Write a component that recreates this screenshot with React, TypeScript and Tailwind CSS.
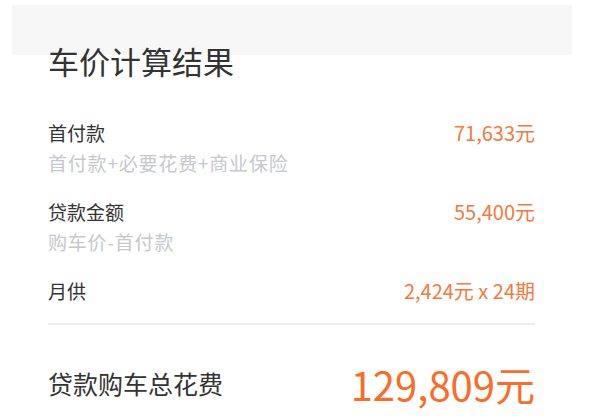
import React from "react";

const font = { fontFamily: '"Noto Sans CJK SC", "Noto Sans", sans-serif' };

function Row({ label, value, sub }: { label: string; value: string; sub?: string }) {
  return (
    <div className="flex flex-col">
      <div className="flex items-center justify-between h-[30px]">
        <span className="text-[19px] text-[#333333]">{label}</span>
        <span className="text-[20px] text-[#f27a3c]">{value}</span>
      </div>
      {sub && <div className="h-[30px] flex items-center text-[19px] tracking-[0.8px] text-[#c6c8cd]">{sub}</div>}
    </div>
  );
}

export default function App() {
  return (
    <div className="w-[600px] h-[416px] bg-white overflow-hidden" style={font}>
      <div className="ml-[12px] mr-[28px] mt-[5px] h-[50px] bg-[#f7f7f7]" />
      <div className="relative pl-[48px] pr-[65px] -mt-[16px]">
        <div className="h-[42px] flex items-center text-[31px] text-[#333333] leading-none">车价计算结果</div>
        <div className="mt-[37px] flex flex-col gap-[19px]">
          <Row label="首付款" value="71,633元" sub="首付款+必要花费+商业保险" />
          <Row label="贷款金额" value="55,400元" sub="购车价-首付款" />
          <Row label="月供" value="2,424元 x 24期" />
        </div>
        <div className="mt-[17px] h-[2px] bg-[#eeeeee]" />
        <div className="mt-[35px] flex items-center justify-between h-[48px]">
          <span className="text-[25px] text-[#333333]">贷款购车总花费</span>
          <span className="text-[40px] text-[#f86d27] leading-none">129,809元</span>
        </div>
      </div>
    </div>
  );
}
